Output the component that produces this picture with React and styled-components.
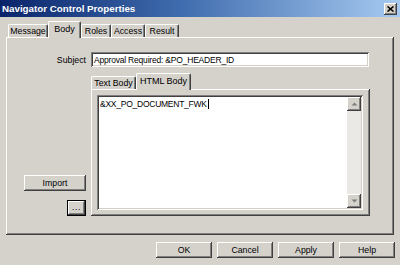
import React from "react";
import styled, { createGlobalStyle, css } from "styled-components";

const GlobalStyle = createGlobalStyle`
  html, body { margin: 0; padding: 0; background: #d4d0c8; }
  body { width: 400px; height: 265px; overflow: hidden; }
  * { box-sizing: border-box; }
`;

const raised = css`
  box-shadow: inset -1px -1px #404040, inset 1px 1px #ffffff,
    inset -2px -2px #808080, inset 2px 2px #d4d0c8;
`;

const sunken = css`
  box-shadow: inset 1px 1px #808080, inset -1px -1px #ffffff,
    inset 2px 2px #404040, inset -2px -2px #d4d0c8;
`;

const Window = styled.div`
  width: 400px;
  height: 265px;
  background: #d5d2cc;
  font-family: "Liberation Sans", Arial, sans-serif;
  font-size: 8.5px;
  color: #000;
  display: flex;
  flex-direction: column;
`;

const TitleBar = styled.div`
  height: 17px;
  background: linear-gradient(to right, #0a246a 0%, #3f6cae 45%, #a6caf0 100%);
  display: flex;
  align-items: center;
  justify-content: space-between;
  padding: 0 3px 0 2px;
`;

const Title = styled.span`
  color: #fff;
  font-weight: bold;
  font-size: 9.75px;
`;

const CloseButton = styled.div`
  width: 13px;
  height: 12px;
  background: #d4d0c8;
  ${raised};
  display: flex;
  align-items: center;
  justify-content: center;
`;

const Content = styled.div`
  flex: 1;
  display: flex;
  flex-direction: column;
  padding: 4px 5px 0 6px;
`;

const TabStrip = styled.div`
  display: flex;
  align-items: flex-end;
  height: 16px;
  padding-left: 2px;
  position: relative;
  z-index: 1;
`;

const Tab = styled.div`
  width: ${(p) => p.$w}px;
  height: ${(p) => (p.$active ? 17 : 13)}px;
  margin-bottom: ${(p) => (p.$active ? -1 : 0)}px;
  padding-top: ${(p) => (p.$active ? 2 : 1)}px;
  background: #d5d2cc;
  border-top: 1px solid #fff;
  border-left: 1px solid #fff;
  border-right: 1px solid #404040;
  border-radius: 2px 2px 0 0;
  box-shadow: inset -1px 0 #808080;
  display: flex;
  align-items: flex-start;
  justify-content: center;
  white-space: nowrap;
  font-size: ${(p) => (p.$active ? "9px" : "8.75px")};
`;

const TabPanel = styled.div`
  width: 388px;
  height: 198px;
  background: #d5d2cc;
  ${raised};
  padding: 15px 24px 19px 18px;
`;

const FormGrid = styled.div`
  display: grid;
  grid-template-columns: 62px 279px;
  grid-template-rows: 15px 1fr;
  column-gap: 5px;
  row-gap: 6px;
  height: 100%;
`;

const Label = styled.div`
  display: flex;
  align-items: center;
  justify-content: flex-end;
  font-size: 8.75px;
`;

const TextField = styled.div`
  background: #fff;
  ${sunken};
  padding: 2px 3px;
  display: flex;
  align-items: center;
  white-space: nowrap;
  width: 278px;
  letter-spacing: -0.2px;
`;

const SideButtons = styled.div`
  display: flex;
  flex-direction: column;
  align-items: flex-end;
  justify-content: flex-end;
  gap: 9px;
`;

const Button = styled.div`
  width: ${(p) => p.$w}px;
  height: 16px;
  background: #d5d2cc;
  display: flex;
  align-items: center;
  justify-content: center;
  font-size: 8.75px;
  ${(p) =>
    p.$default
      ? css`
          box-shadow: inset 0 0 0 1px #000, inset -2px -2px #404040,
            inset 2px 2px #ffffff, inset -3px -3px #808080;
          padding-bottom: 3px;
          letter-spacing: 0.5px;
        `
      : raised};
`;

const InnerTabs = styled.div`
  display: flex;
  flex-direction: column;
`;

const InnerTabStrip = styled.div`
  display: flex;
  align-items: flex-end;
  height: 16px;
  position: relative;
  z-index: 1;
`;

const InnerPanel = styled.div`
  flex: 1;
  background: #d5d2cc;
  ${raised};
  padding: 6px 7px 6px 6px;
  display: flex;
`;

const TextArea = styled.div`
  flex: 1;
  background: #fff;
  ${sunken};
  padding: 2px;
  display: flex;
`;

const TextBody = styled.div`
  flex: 1;
  padding: 2px 1px;
  display: flex;
  align-items: flex-start;
  white-space: nowrap;
  line-height: 10px;
  letter-spacing: -0.25px;
`;

const Caret = styled.span`
  display: inline-block;
  width: 1px;
  height: 10px;
  background: #000;
  margin-left: 1px;
`;

const ScrollBar = styled.div`
  width: 14px;
  display: flex;
  flex-direction: column;
  justify-content: space-between;
  background: #ebe9e5;
`;

const ScrollArrow = styled.div`
  height: 14px;
  background: #d5d2cc;
  ${raised};
  display: flex;
  align-items: center;
  justify-content: center;
`;

const ButtonRow = styled.div`
  display: flex;
  justify-content: flex-end;
  gap: 5px;
  margin-top: 7px;
`;

const Arrow = ({ down }) => (
  <svg width="7" height="4" viewBox="0 0 7 4">
    <path
      d={down ? "M0.5 0.5h6L3.5 3.5z" : "M0.5 3.5h6L3.5 0.5z"}
      fill="#808080"
    />
  </svg>
);

export default function App() {
  return (
    <>
      <GlobalStyle />
      <Window>
        <TitleBar>
          <Title>Navigator Control Properties</Title>
          <CloseButton>
            <svg width="7" height="6" viewBox="0 0 7 6">
              <path d="M0.5 0.5L6.5 5.5M6.5 0.5L0.5 5.5" stroke="#000" strokeWidth="1.6" />
            </svg>
          </CloseButton>
        </TitleBar>
        <Content>
          <TabStrip>
            <Tab $w={40}>Message</Tab>
            <Tab $w={33} $active>Body</Tab>
            <Tab $w={30}>Roles</Tab>
            <Tab $w={34}>Access</Tab>
            <Tab $w={34}>Result</Tab>
          </TabStrip>
          <TabPanel>
            <FormGrid>
              <Label>Subject</Label>
              <TextField>Approval Required: &amp;PO_HEADER_ID</TextField>
              <SideButtons>
                <Button $w={62}>Import</Button>
                <Button $w={19} $default>
                  ...
                </Button>
              </SideButtons>
              <InnerTabs>
                <InnerTabStrip>
                  <Tab $w={45}>Text Body</Tab>
                  <Tab $w={55} $active>HTML Body</Tab>
                </InnerTabStrip>
                <InnerPanel>
                  <TextArea>
                    <TextBody>
                      &amp;XX_PO_DOCUMENT_FWK
                      <Caret />
                    </TextBody>
                    <ScrollBar>
                      <ScrollArrow>
                        <Arrow />
                      </ScrollArrow>
                      <ScrollArrow>
                        <Arrow down />
                      </ScrollArrow>
                    </ScrollBar>
                  </TextArea>
                </InnerPanel>
              </InnerTabs>
            </FormGrid>
          </TabPanel>
          <ButtonRow>
            <Button $w={56}>OK</Button>
            <Button $w={56}>Cancel</Button>
            <Button $w={56}>Apply</Button>
            <Button $w={56}>Help</Button>
          </ButtonRow>
        </Content>
      </Window>
    </>
  );
}
